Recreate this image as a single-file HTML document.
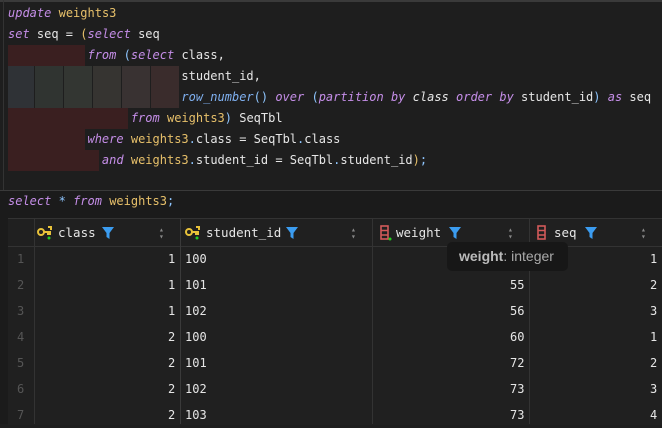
<!DOCTYPE html><html><head><style>
body{margin:0;width:662px;height:424px;background:#1e1e1e;overflow:hidden;position:relative;font-family:"DejaVu Sans Mono","Liberation Mono",monospace;font-size:12px;color:#e6e6e6}
.a{position:absolute}
.ln{position:absolute;left:8px;height:21px;line-height:21px;white-space:pre}
.k{color:#c58ee8;font-style:italic}.t{color:#e7c06a}.p{color:#e7c06a}.f{color:#7fb0f0;font-style:italic}.o{color:#8fc6ff}
.hd{position:absolute;top:220px;height:26px;line-height:26px;color:#e6e6e6;font-size:12.5px}
.cell{position:absolute;height:26px;line-height:26px}
.rn{color:#555;left:17px}
</style></head><body>
<div class="a" style="left:0;top:0;width:662px;height:2px;background:#3a3a3a"></div>
<div class="a" style="left:3px;top:0;width:1px;height:424px;background:#333"></div>
<div class="a" style="left:8px;top:45px;width:77px;height:21px;background:#3a1f20"></div>
<div class="a" style="left:8px;top:66px;width:26px;height:42px;background:#2f3236"></div>
<div class="a" style="left:35px;top:66px;width:28px;height:42px;background:#303431"></div>
<div class="a" style="left:64px;top:66px;width:28px;height:42px;background:#333632"></div>
<div class="a" style="left:93px;top:66px;width:28px;height:42px;background:#363431"></div>
<div class="a" style="left:122px;top:66px;width:28px;height:42px;background:#393232"></div>
<div class="a" style="left:151px;top:66px;width:28px;height:42px;background:#3a2c2c"></div>
<div class="a" style="left:8px;top:108px;width:120px;height:21px;background:#3a1f20"></div>
<div class="a" style="left:8px;top:129px;width:77px;height:21px;background:#3a1f20"></div>
<div class="a" style="left:8px;top:150px;width:91px;height:21px;background:#3a1f20"></div>
<div class="ln" style="top:3px"><span class="k">update</span> <span class="t">weights3</span></div>
<div class="ln" style="top:24px"><span class="k">set</span> seq = <span class="p">(</span><span class="k">select</span> seq</div>
<div class="ln" style="top:45px">           <span class="k">from</span> <span class="o">(</span><span class="k">select</span> class,</div>
<div class="ln" style="top:66px">                        student_id,</div>
<div class="ln" style="top:87px">                        <span class="f">row_number</span><span class="o">()</span> <span class="k">over</span> <span class="o">(</span><span class="k">partition by</span> <span style="font-style:italic">class</span> <span class="k">order by</span> student_id<span class="o">)</span> <span class="k">as</span> seq</div>
<div class="ln" style="top:108px">                 <span class="k">from</span> <span class="t">weights3</span><span class="o">)</span> SeqTbl</div>
<div class="ln" style="top:129px">           <span class="k">where</span> <span class="t">weights3</span><span class="o">.</span>class = SeqTbl<span class="o">.</span>class</div>
<div class="ln" style="top:150px">             <span class="k">and</span> <span class="t">weights3</span><span class="o">.</span>student_id = SeqTbl<span class="o">.</span>student_id<span class="p">)</span><span class="o">;</span></div>
<div class="a" style="left:0;top:190px;width:662px;height:1px;background:#3a3a3a"></div>
<div class="a" style="left:0;top:191px;width:662px;height:233px;background:#1b1b1b"></div>
<div class="ln" style="top:191px"><span class="k">select</span> <span class="o">*</span> <span class="k">from</span> <span class="t">weights3</span><span class="o">;</span></div>
<div class="a" style="left:8px;top:218px;width:654px;height:206px;background:#202020;border-top:1px solid #333"></div>
<div class="a" style="left:8px;top:246px;width:654px;height:1px;background:#333"></div>
<div class="a" style="left:34px;top:219px;width:1px;height:205px;background:#333"></div>
<div class="a" style="left:180px;top:219px;width:1px;height:205px;background:#3a3a3a"></div>
<div class="a" style="left:372px;top:219px;width:1px;height:205px;background:#333"></div>
<div class="a" style="left:529px;top:219px;width:1px;height:205px;background:#333"></div>
<svg class="a" style="left:37px;top:226px" width="16" height="14"><circle cx="4" cy="6" r="3" fill="none" stroke="#e8c23a" stroke-width="2"/><path d="M7 6h7M11 6v3M13 6v3M11 1h3v3" stroke="#e8c23a" stroke-width="2" fill="none"/><circle cx="12" cy="12" r="1.5" fill="#2c2"/></svg>
<div class="hd" style="left:58px">class</div>
<svg class="a" style="left:102px;top:227px" width="12" height="12"><path d="M0 0h12L7.5 6v6L4.5 10V6z" fill="#3b9cf0"/></svg>
<div class="a" style="left:159px;top:226px;color:#888;font-size:8px;line-height:7px">▴<br>▾</div>
<svg class="a" style="left:185px;top:226px" width="16" height="14"><circle cx="4" cy="6" r="3" fill="none" stroke="#e8c23a" stroke-width="2"/><path d="M7 6h7M11 6v3M13 6v3M11 1h3v3" stroke="#e8c23a" stroke-width="2" fill="none"/><circle cx="12" cy="12" r="1.5" fill="#2c2"/></svg>
<div class="hd" style="left:206px">student_id</div>
<svg class="a" style="left:286px;top:227px" width="12" height="12"><path d="M0 0h12L7.5 6v6L4.5 10V6z" fill="#3b9cf0"/></svg>
<div class="a" style="left:351px;top:226px;color:#888;font-size:8px;line-height:7px">▴<br>▾</div>
<svg class="a" style="left:380px;top:225px" width="12" height="16"><rect x="1" y="1" width="7" height="13" fill="none" stroke="#d35a5a" stroke-width="1.6"/><path d="M1 5.5h7M1 10h7" stroke="#d35a5a" stroke-width="1.4"/><circle cx="10" cy="14" r="1.5" fill="#2c2"/></svg>
<div class="hd" style="left:396px">weight</div>
<svg class="a" style="left:449px;top:227px" width="12" height="12"><path d="M0 0h12L7.5 6v6L4.5 10V6z" fill="#3b9cf0"/></svg>
<div class="a" style="left:508px;top:226px;color:#888;font-size:8px;line-height:7px">▴<br>▾</div>
<svg class="a" style="left:537px;top:225px" width="12" height="16"><rect x="1" y="1" width="7" height="13" fill="none" stroke="#d35a5a" stroke-width="1.6"/><path d="M1 5.5h7M1 10h7" stroke="#d35a5a" stroke-width="1.4"/></svg>
<div class="hd" style="left:554px">seq</div>
<svg class="a" style="left:585px;top:227px" width="12" height="12"><path d="M0 0h12L7.5 6v6L4.5 10V6z" fill="#3b9cf0"/></svg>
<div class="a" style="left:641px;top:226px;color:#888;font-size:8px;line-height:7px">▴<br>▾</div>

<div style="position:absolute;top:246px;left:0;width:662px">
<div class="cell rn" style="top:0">1</div><div class="cell" style="top:0;left:168px">1</div><div class="cell" style="top:0;left:185px">100</div><div class="cell" style="top:0;left:650px">1</div>
<div class="cell rn" style="top:26px">2</div><div class="cell" style="top:26px;left:168px">1</div><div class="cell" style="top:26px;left:185px">101</div><div class="cell" style="top:26px;left:510px">55</div><div class="cell" style="top:26px;left:650px">2</div>
<div class="cell rn" style="top:52px">3</div><div class="cell" style="top:52px;left:168px">1</div><div class="cell" style="top:52px;left:185px">102</div><div class="cell" style="top:52px;left:510px">56</div><div class="cell" style="top:52px;left:650px">3</div>
<div class="cell rn" style="top:78px">4</div><div class="cell" style="top:78px;left:168px">2</div><div class="cell" style="top:78px;left:185px">100</div><div class="cell" style="top:78px;left:510px">60</div><div class="cell" style="top:78px;left:650px">1</div>
<div class="cell rn" style="top:104px">5</div><div class="cell" style="top:104px;left:168px">2</div><div class="cell" style="top:104px;left:185px">101</div><div class="cell" style="top:104px;left:510px">72</div><div class="cell" style="top:104px;left:650px">2</div>
<div class="cell rn" style="top:130px">6</div><div class="cell" style="top:130px;left:168px">2</div><div class="cell" style="top:130px;left:185px">102</div><div class="cell" style="top:130px;left:510px">73</div><div class="cell" style="top:130px;left:650px">3</div>
<div class="cell rn" style="top:156px">7</div><div class="cell" style="top:156px;left:168px">2</div><div class="cell" style="top:156px;left:185px">103</div><div class="cell" style="top:156px;left:510px">73</div><div class="cell" style="top:156px;left:650px">4</div>
</div>
<div class="a" style="left:447px;top:242px;width:121px;height:29px;background:#171717;border-radius:5px;font-family:'Liberation Sans',sans-serif;font-size:14px;line-height:29px;color:#aaa;text-indent:12px;white-space:nowrap"><b style="color:#bbb">weight</b>: integer</div>
</body></html>
